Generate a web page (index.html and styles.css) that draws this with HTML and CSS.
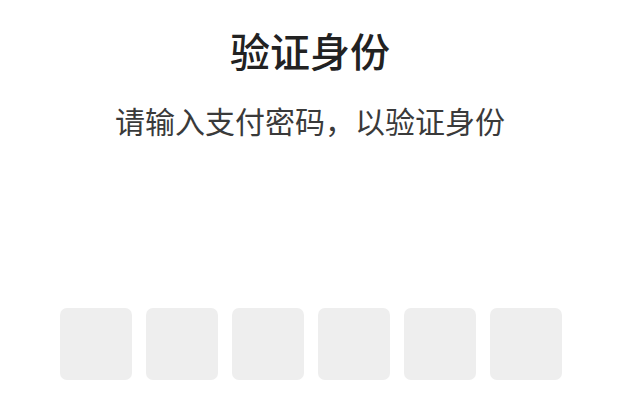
FILE: index.html
```html
<!DOCTYPE html>
<html lang="zh-CN">
<head>
<meta charset="utf-8">
<link rel="stylesheet" href="styles.css">
</head>
<body>
<main class="page">
  <h1 class="title">验证身份</h1>
  <p class="subtitle">请输入支付密码，以验证身份</p>
  <div class="code">
    <div class="cell"></div>
    <div class="cell"></div>
    <div class="cell"></div>
    <div class="cell"></div>
    <div class="cell"></div>
    <div class="cell"></div>
  </div>
</main>
</body>
</html>
```
FILE: styles.css
```css
html, body {
  margin: 0;
  padding: 0;
  background: #ffffff;
}
.page {
  width: 620px;
  height: 400px;
  display: flex;
  flex-direction: column;
  align-items: center;
  font-family: "Noto Sans CJK SC", "Noto Sans", sans-serif;
  box-sizing: border-box;
  padding-top: 30px;
}
.title {
  margin: 0;
  font-size: 40px;
  line-height: 40px;
  font-weight: 500;
  color: #222222;
}
.subtitle {
  margin: 35px 0 0;
  font-size: 30px;
  line-height: 30px;
  font-weight: 400;
  color: #3a3a3a;
}
.code {
  margin-top: 173px;
  display: flex;
  gap: 14px;
  margin-left: 2px;
}
.cell {
  width: 72px;
  height: 72px;
  border-radius: 7px;
  background: #eeeeee;
}
```
